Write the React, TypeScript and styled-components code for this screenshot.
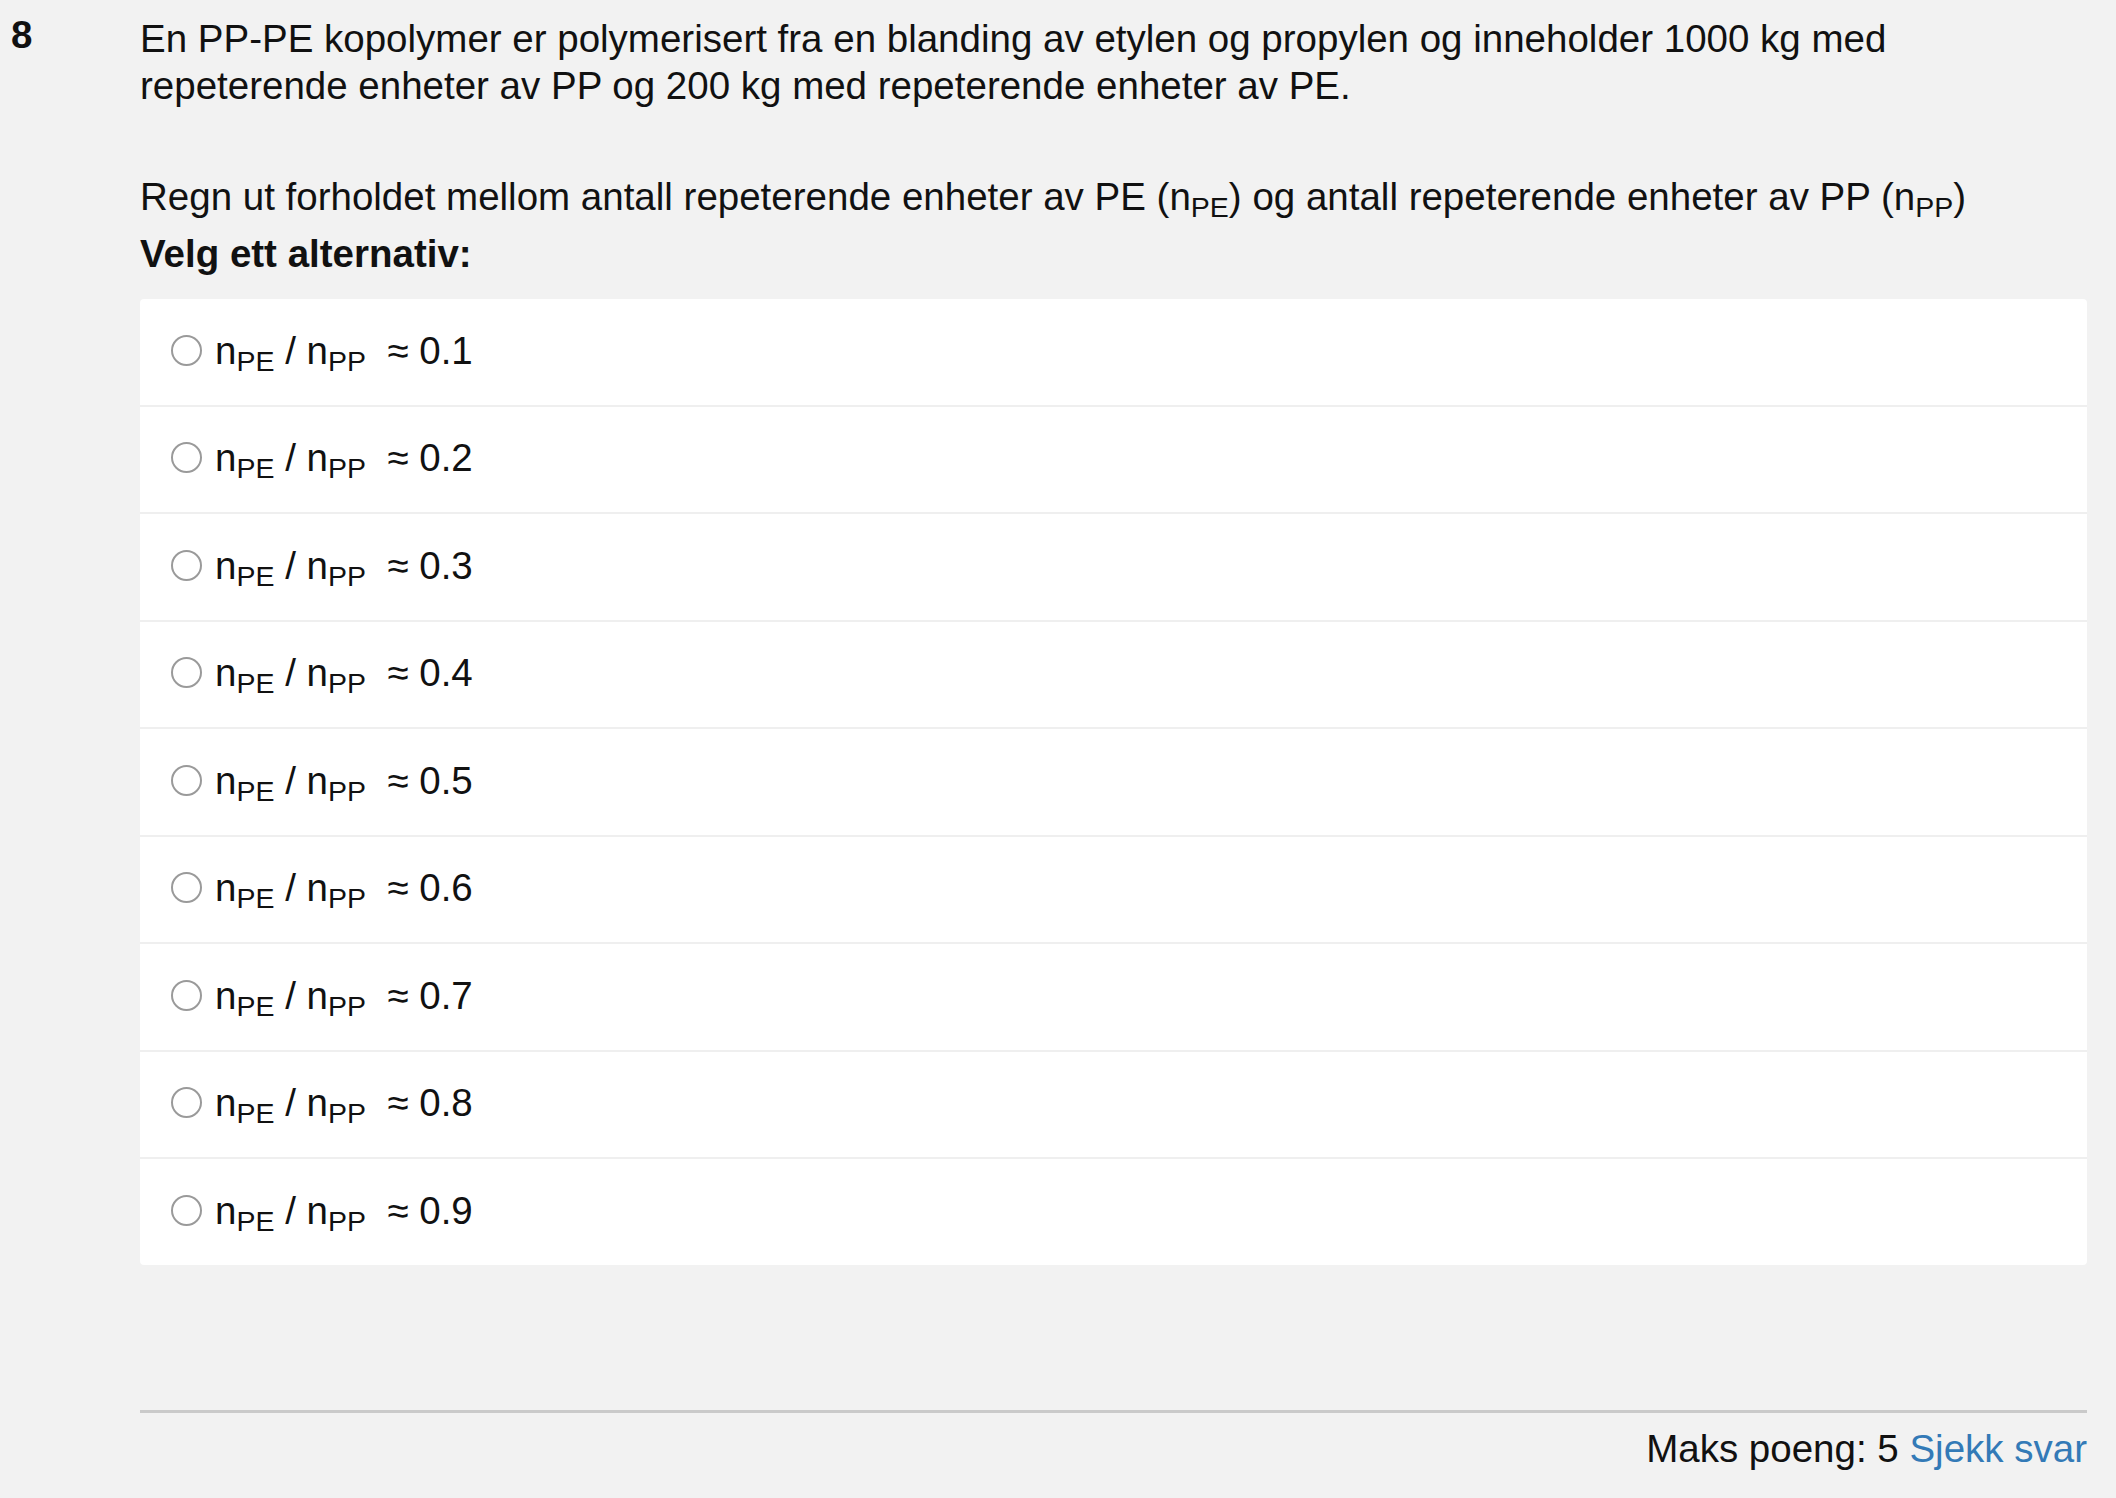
import * as React from 'react';
import styled, { createGlobalStyle } from 'styled-components';

const GlobalStyle = createGlobalStyle`
  html, body {
    margin: 0;
    padding: 0;
    background: #f2f2f2;
  }
  body {
    font-family: "Liberation Sans", Arial, sans-serif;
    color: #111;
  }
`;

const Page = styled.div`
  padding: 15px 29px 40px 11px;
`;

const Question = styled.div`
  display: grid;
  grid-template-columns: 129px 1fr;
`;

const Number = styled.div`
  font-size: 38.5px;
  line-height: 47px;
  font-weight: bold;
  margin-top: -4px;
`;

const Body = styled.div`
  display: flex;
  flex-direction: column;
`;

const Text = styled.p<{ $gap?: number }>`
  margin: ${p => p.$gap || 0}px 0 0;
  font-size: 38.5px;
  line-height: 47px;
`;

const Sub = styled.sub`
  font-size: 28.5px;
  line-height: 0;
  vertical-align: -7px;
`;

const Prompt = styled.div`
  margin-top: 10px;
  font-size: 38.5px;
  line-height: 47px;
  font-weight: bold;
`;

const Options = styled.div`
  margin-top: 22px;
  display: flex;
  flex-direction: column;
  gap: 2px;
  background: #efefef;
  border-radius: 4px;
  overflow: hidden;
`;

const Option = styled.label`
  height: 105.5px;
  box-sizing: border-box;
  padding: 0 0 3px 31px;
  background: #fff;
  display: flex;
  align-items: center;
  cursor: pointer;
`;

const Radio = styled.input`
  appearance: none;
  margin: 0 13px 0 0;
  width: 31px;
  height: 31px;
  border: 2px solid #9a9a9a;
  border-radius: 50%;
  box-sizing: border-box;
  background: #fff;
  flex: none;
  &:checked {
    border-color: #337ab7;
    box-shadow: inset 0 0 0 6px #fff;
    background: #337ab7;
  }
`;

const Label = styled.span`
  font-size: 38.5px;
  line-height: 47px;
  white-space: pre;
`;

const Rule = styled.div`
  margin-top: 145px;
  height: 3px;
  background: #cacaca;
`;

const Score = styled.div`
  margin-top: 12px;
  text-align: right;
  font-size: 38.5px;
  line-height: 47px;
`;

const Link = styled.a`
  color: #337ab7;
  text-decoration: none;
  cursor: pointer;
`;

const values = ['0.1', '0.2', '0.3', '0.4', '0.5', '0.6', '0.7', '0.8', '0.9'];

export default function App() {
  const [picked, setPicked] = React.useState<string | null>(null);
  return (
    <Page>
      <GlobalStyle />
      <Question>
        <Number>8</Number>
        <Body>
          <Text>
            En PP-PE kopolymer er polymerisert fra en blanding av etylen og propylen og inneholder 1000 kg med
            <br />
            repeterende enheter av PP og 200 kg med repeterende enheter av PE.
          </Text>
          <Text $gap={64}>
            Regn ut forholdet mellom antall repeterende enheter av PE (n<Sub>PE</Sub>) og antall repeterende
            enheter av PP (n<Sub>PP</Sub>)
          </Text>
          <Prompt>Velg ett alternativ:</Prompt>
          <Options>
            {values.map(v => (
              <Option key={v}>
                <Radio
                  type="radio"
                  name="q8"
                  checked={picked === v}
                  onChange={() => setPicked(v)}
                />
                <Label>
                  n<Sub>PE</Sub> / n<Sub>PP</Sub>{'\u00a0 ≈ '}{v}
                </Label>
              </Option>
            ))}
          </Options>
          <Rule />
          <Score>
            Maks poeng: 5 <Link>Sjekk svar</Link>
          </Score>
        </Body>
      </Question>
    </Page>
  );
}
